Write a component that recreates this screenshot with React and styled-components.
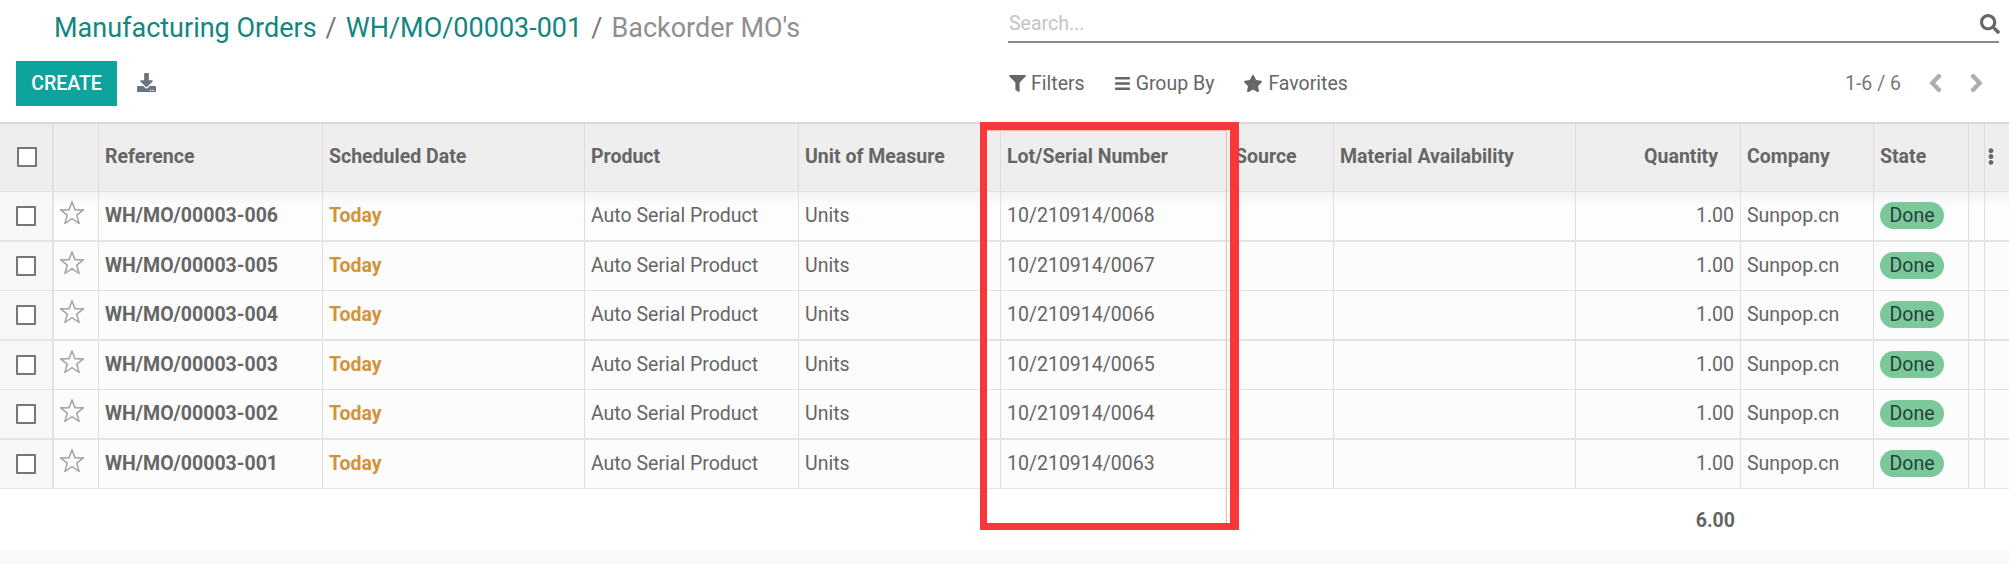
import React from 'react';
import styled, { createGlobalStyle } from 'styled-components';
import { FaDownload, FaFilter, FaBars, FaStar, FaSearch, FaChevronLeft, FaChevronRight, FaEllipsisV } from 'react-icons/fa';

const GlobalStyle = createGlobalStyle`
	html, body {
		margin: 0;
		padding: 0;
		background: #fff;
		font-family: Roboto, "Liberation Sans", sans-serif;
		color: #666;
	}
	* { box-sizing: border-box; }
`;

const Page = styled.div`
	position: relative;
	width: 2009px;
	height: 564px;
	overflow: hidden;
	background: #f9f9f9;
`;

const ControlPanel = styled.div`
	display: grid;
	grid-template-columns: 1008px 991px;
	height: 122px;
	background: #fff;
`;

const PanelLeft = styled.div`
	display: flex;
	flex-direction: column;
`;

const PanelRight = styled.div`
	display: flex;
	flex-direction: column;
`;

const Breadcrumb = styled.div`
	height: 61px;
	padding: 11px 0 0 54px;
	font-size: 27px;
	line-height: 34px;
	color: #8f8f8f;
	white-space: nowrap;
`;

const CrumbLink = styled.span`
	color: #11877f;
`;

const Slash = styled.span`
	color: #777;
	margin: 0 9px;
`;

const Buttons = styled.div`
	display: flex;
	align-items: center;
	gap: 20px;
	padding-left: 16px;
`;

const CreateButton = styled.div`
	width: 101px;
	height: 45px;
	display: flex;
	align-items: center;
	justify-content: center;
	background: #0ca49d;
	color: #fff;
	font-size: 19.5px;
	font-weight: 500;
`;

const DownloadIcon = styled(FaDownload)`
	width: 19px;
	height: 19px;
	color: #6c7380;
	margin-top: -2px;
`;

const SearchBar = styled.div`
	height: 43px;
	margin-bottom: 18px;
	display: flex;
	align-items: center;
	justify-content: space-between;
	padding-top: 6px;
	border-bottom: 2px solid #8a8a8a;
`;

const Placeholder = styled.span`
	font-size: 19.5px;
	color: #c4c4c4;
	padding-left: 1px;
`;

const SearchIcon = styled(FaSearch)`
	width: 20px;
	height: 20px;
	color: #666;
	margin-right: -1px;
`;

const FilterRow = styled.div`
	display: flex;
	align-items: center;
	height: 44px;
	padding-left: 1px;
`;

const FilterItem = styled.div`
	display: flex;
	align-items: center;
	gap: 5px;
	margin-right: 29px;
	font-size: 19.5px;
	color: #666;
	svg {
		width: ${p => p.$icon || 17}px;
		height: 17px;
	}
`;

const Pager = styled.div`
	margin-left: auto;
	display: flex;
	align-items: center;
	gap: 28px;
	margin-right: 16px;
	font-size: 19.5px;
	color: #777;
	svg {
		width: 13px;
		height: 20px;
		color: #adadad;
		stroke: currentColor;
		stroke-width: 30;
	}
`;

const Table = styled.table`
	width: 2009px;
	table-layout: fixed;
	border-collapse: separate;
	border-spacing: 0;
	background: #fff;
	font-size: 19.5px;
`;

const HeadCell = styled.th`
	height: 70px;
	padding: 0 6px 2px;
	padding-left: ${p => p.$inset || 6}px;
	padding-right: ${p => (p.$right ? '22px' : '6px')};
	background: #eee;
	border-top: 2px solid #d9d9d9;
	border-bottom: 1px solid #e0e0e0;
	border-right: ${p => (p.$last ? 0 : '1px')} solid #dcdcdc;
	font-weight: 700;
	text-align: ${p => (p.$right ? 'right' : 'left')};
	white-space: nowrap;
	overflow: hidden;
	color: #666;
`;

const Row = styled.tr`
	background: ${p => (p.$first ? 'linear-gradient(#f4f4f4, #fdfdfd 30%)' : '#fcfcfc')};
`;

const Cell = styled.td`
	height: ${p => p.$h}px;
	padding: 0 6px 1px;
	border-bottom: ${p => p.$line}px solid #e4e4e4;
	border-right: ${p => (p.$last ? 0 : '1px')} solid #dfdfdf;
	font-weight: ${p => (p.$bold ? 700 : 400)};
	color: ${p => (p.$today ? '#d2933a' : '#666')};
	text-align: ${p => (p.$right ? 'right' : 'left')};
	white-space: nowrap;
	overflow: hidden;
`;

const CheckCell = styled(Cell)`
	background: #f7f7f7;
	padding: 0 0 0 16px;
	border-right: 2px solid #e2e2e2;
`;

const HeadCheckCell = styled(HeadCell)`
	padding: 0 0 2px 17px;
	border-right: 2px solid #e0e0e0;
`;

const Check = styled.div`
	width: 20px;
	height: 20px;
	background: #fff;
	border: 2px solid #777;
	border-radius: 1px;
`;

const StarOutline = styled.svg`
	display: block;
	width: 24px;
	height: 23px;
	margin: -6px 0 0 0;
	fill: none;
	stroke: #a8a8a8;
	stroke-width: 1.6;
`;

const Pill = styled.span`
	display: inline-block;
	width: 64px;
	height: 27px;
	line-height: 27px;
	border-radius: 14px;
	text-align: center;
	background: #7bc99b;
	color: #26423a;
`;

const Dots = styled(FaEllipsisV)`
	display: block;
	width: 16px;
	height: 17px;
	color: #666;
	margin-left: -8px;
`;

const TotalCell = styled.td`
	height: 62px;
	padding: 0 6px;
	background: #fff;
	font-weight: 700;
	text-align: right;
	color: #666;
`;

const Highlight = styled.div`
	position: absolute;
	left: 980px;
	top: 122px;
	width: 259px;
	height: 408px;
	border: solid #f73838;
	border-width: 8px 9px 7px 7px;
	pointer-events: none;
	&::after {
		content: '';
		position: absolute;
		inset: 0 3px 0 0;
		border: solid #f3b5b9;
		border-width: 1px 1px 0 0;
	}
`;

const widths = [54, 45, 224, 262, 214, 202, 230, 103, 242, 165, 133, 95, 16, 24];

const orders = [
	{ ref: 'WH/MO/00003-006', lot: '10/210914/0068', h: 50, line: 2 },
	{ ref: 'WH/MO/00003-005', lot: '10/210914/0067', h: 49, line: 1 },
	{ ref: 'WH/MO/00003-004', lot: '10/210914/0066', h: 50, line: 2 },
	{ ref: 'WH/MO/00003-003', lot: '10/210914/0065', h: 49, line: 1 },
	{ ref: 'WH/MO/00003-002', lot: '10/210914/0064', h: 50, line: 2 },
	{ ref: 'WH/MO/00003-001', lot: '10/210914/0063', h: 49, line: 1 },
];

function OrderRow({ order, first }) {
	const cell = { $h: order.h, $line: order.line };
	return (
		<Row $first={first}>
			<CheckCell {...cell}><Check /></CheckCell>
			<Cell {...cell}>
				<StarOutline viewBox="0 0 24 23">
					<polygon points="12,0.9 14.9,8.6 23.4,8.9 16.75,14.15 19.05,22.3 12,17.6 4.95,22.3 7.25,14.15 0.6,8.9 9.1,8.6" />
				</StarOutline>
			</Cell>
			<Cell {...cell} $bold>{order.ref}</Cell>
			<Cell {...cell} $today $bold>Today</Cell>
			<Cell {...cell}>Auto Serial Product</Cell>
			<Cell {...cell}>Units</Cell>
			<Cell {...cell}>{order.lot}</Cell>
			<Cell {...cell} />
			<Cell {...cell} />
			<Cell {...cell} $right>1.00</Cell>
			<Cell {...cell}>Sunpop.cn</Cell>
			<Cell {...cell}><Pill>Done</Pill></Cell>
			<Cell {...cell} />
			<Cell {...cell} $last />
		</Row>
	);
}

export default function App() {
	return (
		<Page>
			<GlobalStyle />
			<ControlPanel>
				<PanelLeft>
					<Breadcrumb>
						<CrumbLink>Manufacturing Orders</CrumbLink>
						<Slash>/</Slash>
						<CrumbLink>WH/MO/00003-001</CrumbLink>
						<Slash>/</Slash>
						Backorder MO's
					</Breadcrumb>
					<Buttons>
						<CreateButton>CREATE</CreateButton>
						<DownloadIcon />
					</Buttons>
				</PanelLeft>
				<PanelRight>
					<SearchBar>
						<Placeholder>Search...</Placeholder>
						<SearchIcon />
					</SearchBar>
					<FilterRow>
						<FilterItem><FaFilter />Filters</FilterItem>
						<FilterItem><FaBars />Group By</FilterItem>
						<FilterItem $icon={20}><FaStar />Favorites</FilterItem>
						<Pager>
							<span>1-6 / 6</span>
							<FaChevronLeft />
							<FaChevronRight />
						</Pager>
					</FilterRow>
				</PanelRight>
			</ControlPanel>
			<Table>
				<colgroup>
					{widths.map((w, i) => <col key={i} width={w} />)}
				</colgroup>
				<thead>
					<tr>
						<HeadCheckCell><Check /></HeadCheckCell>
						<HeadCell />
						<HeadCell>Reference</HeadCell>
						<HeadCell>Scheduled Date</HeadCell>
						<HeadCell>Product</HeadCell>
						<HeadCell>Unit of Measure</HeadCell>
						<HeadCell>Lot/Serial Number</HeadCell>
						<HeadCell $inset={4}>Source</HeadCell>
						<HeadCell>Material Availability</HeadCell>
						<HeadCell $right>Quantity</HeadCell>
						<HeadCell>Company</HeadCell>
						<HeadCell>State</HeadCell>
						<HeadCell />
						<HeadCell $last><Dots /></HeadCell>
					</tr>
				</thead>
				<tbody>
					{orders.map((o, i) => <OrderRow key={o.ref} order={o} first={i === 0} />)}
				</tbody>
				<tfoot>
					<tr>
						<TotalCell colSpan={9} />
						<TotalCell>6.00</TotalCell>
						<TotalCell colSpan={4} />
					</tr>
				</tfoot>
			</Table>
			<Highlight />
		</Page>
	);
}
